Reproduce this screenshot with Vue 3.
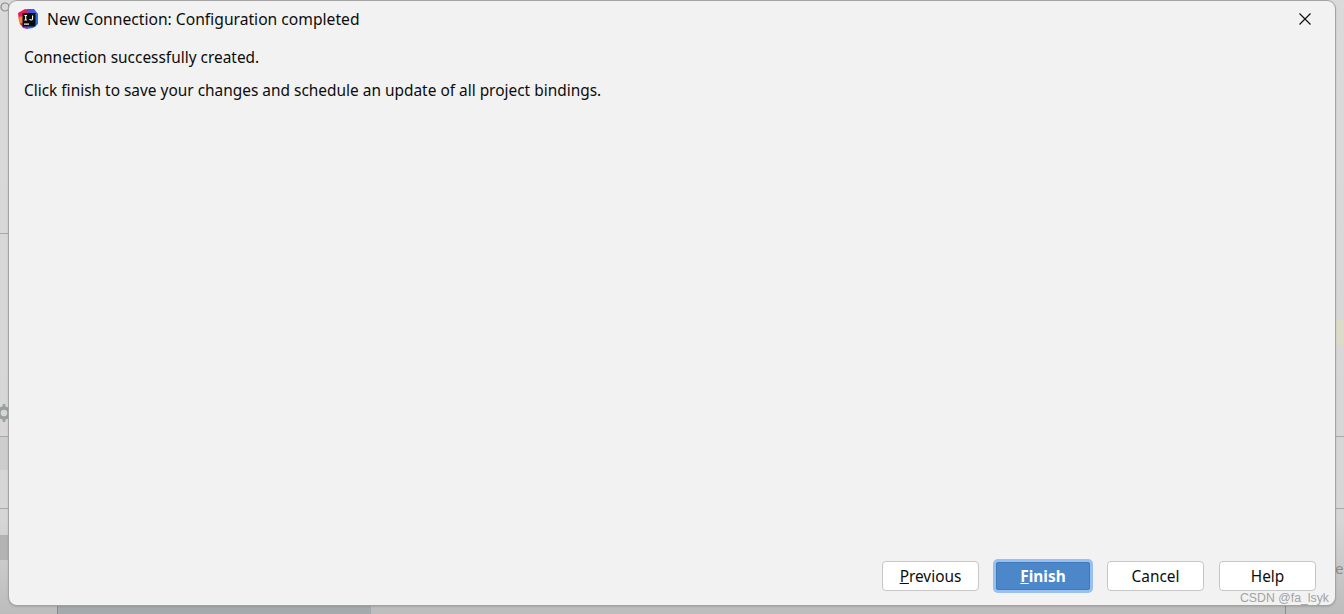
<template>
  <div class="screen">
    <!-- window behind the dialog, dimmed -->
    <div class="backdrop">
      <span class="bg-tab"></span>
      <span class="bg-tab-blue"></span>
      <span class="bg-line left-top"></span>
      <span class="bg-line left-a"></span>
      <span class="bg-band left-d"></span>
      <span class="bg-line left-b"></span>
      <span class="bg-band left-c"></span>
      <svg class="bg-ring" width="16" height="16" viewBox="0 0 16 16">
        <circle cx="5" cy="7" r="4" fill="none" stroke="#8d8d8d" stroke-width="1.2" />
      </svg>
      <svg class="bg-gear" width="18" height="18" viewBox="0 0 18 18">
        <circle cx="9" cy="9" r="5" fill="none" stroke="#9a9fa2" stroke-width="3.4" />
        <path d="M9 0V18M0 9H18M2.6 2.6 15.4 15.4M15.4 2.6 2.6 15.4" stroke="#9a9fa2" stroke-width="2.6" stroke-dasharray="3 12" />
      </svg>
      <span class="bg-panel"></span>
      <span class="bg-divider"></span>
      <span class="bg-band right-a"></span>
      <span class="bg-line right-b"></span>
      <span class="bg-line right-c"></span>
      <span class="bg-text">e</span>
    </div>

    <div class="dialog">
      <div class="titlebar">
        <svg class="logo" width="20" height="20" viewBox="0 0 20 20">
          <path d="M0 4 7 0 12 2 9 10 3 11 .5 8Z" fill="#e5195f" />
          <path d="M8 0 16 0 20 5 13 8Z" fill="#4a55d8" />
          <path d="M14 2 20 5 20 15 15 19 8 20 12 10Z" fill="#2a6fe0" />
          <path d="M0 8 6 7 7 17 2 16Z" fill="#f0833a" />
          <path d="M2 14 9 15 10 20 5 19Z" fill="#a02bb0" />
          <rect x="4.5" y="4" width="13" height="13.5" fill="#0a0a0a" />
          <rect x="6" y="14.5" width="5" height="1.2" fill="#fff" />
          <path d="M6.4 6.5H9M7.7 6.5V11M6.4 11H9M14.6 6.5V9.8C14.6 11.4 12.2 11.4 11.6 10" fill="none" stroke="#fff" stroke-width="1.1" />
        </svg>
        <span class="title">New Connection: Configuration completed</span>
        <svg class="close" width="12" height="12" viewBox="0 0 12 12">
          <path d="M.5.5 11.5 11.5M11.5.5.5 11.5" stroke="#111" stroke-width="1.2" fill="none" />
        </svg>
      </div>

      <div class="body">
        <p>Connection successfully created.</p>
        <p>Click finish to save your changes and schedule an update of all project bindings.</p>
      </div>

      <div class="footer">
        <button class="btn"><u>P</u>revious</button>
        <button class="btn primary"><u>F</u>inish</button>
        <button class="btn">Cancel</button>
        <button class="btn help">Help</button>
      </div>
      <span class="watermark">CSDN @fa_lsyk</span>
    </div>
  </div>
</template>

<script setup>
</script>

<style>
html,
body {
  margin: 0;
  overflow: hidden;
}
</style>

<style scoped>
.screen {
  position: relative;
  box-sizing: border-box;
  width: 1344px;
  height: 614px;
  padding: 1px 9px 9px;
  display: flex;
  background: linear-gradient(#dadada, #d6d6d6 85%, #bcbcbc);
  font-family: "Noto Sans", "Open Sans", sans-serif;
  color: #0c0c0c;
  overflow: hidden;
}
.backdrop {
  position: absolute;
  inset: 0;
}
.backdrop > * {
  position: absolute;
}
.bg-tab {
  left: 115px;
  top: 0;
  width: 92px;
  height: 1px;
  background: #77736e;
}
.bg-tab-blue {
  left: 406px;
  top: 0;
  width: 18px;
  height: 1px;
  background: #6d93bd;
}
.bg-line {
  height: 1px;
  background: #a9a9a9;
}
.bg-band {
  background: #cdcdcd;
}
.left-top {
  left: 0;
  top: 233px;
  width: 9px;
}
.left-a {
  left: 0;
  top: 436px;
  width: 9px;
}
.left-d {
  left: 0;
  top: 437px;
  width: 9px;
  height: 33px;
}
.left-b {
  left: 0;
  top: 508px;
  width: 9px;
}
.left-c {
  left: 0;
  top: 535px;
  width: 9px;
  height: 25px;
  background: #b3b3b3;
}
.bg-ring {
  left: 0;
  top: 0;
}
.bg-gear {
  left: -5px;
  top: 404px;
}
.bg-panel {
  left: 57px;
  top: 605px;
  width: 313px;
  height: 9px;
  background: #a5aaad;
  border-left: 1px solid #8a8a8a;
}
.bg-divider {
  left: 1285px;
  top: 605px;
  width: 1px;
  height: 9px;
  background: #8f8f8f;
}
.right-a {
  left: 1335px;
  top: 319px;
  width: 9px;
  height: 26px;
  background: #dcdac9;
}
.right-b {
  left: 1335px;
  top: 436px;
  width: 9px;
}
.right-c {
  left: 1335px;
  top: 508px;
  width: 9px;
}
.bg-text {
  left: 1335px;
  top: 558px;
  font-size: 15px;
  line-height: 20px;
  color: #8b8b8b;
}
.dialog {
  position: relative;
  flex: 1;
  display: flex;
  flex-direction: column;
  background: #f2f2f2;
  border-radius: 8px;
  box-shadow: 0 0 0 1px #a3a3a3, 0 1px 3px rgba(0, 0, 0, 0.25);
}
.titlebar {
  height: 35px;
  display: flex;
  align-items: center;
  padding: 0 24px 0 9px;
  font-size: 15.65px;
}
.logo {
  margin-right: 9px;
}
.title {
  flex: 1;
}
.body {
  flex: 1;
  padding: 11px 15px 0;
  font-size: 15.43px;
  line-height: 22px;
}
.body p {
  margin: 0 0 11px;
}
.footer {
  display: flex;
  justify-content: flex-end;
  align-items: center;
  gap: 14px;
  padding: 0 19px 14px 0;
}
.btn {
  box-sizing: border-box;
  width: 97px;
  height: 30px;
  padding: 1px 0 0;
  background: #fff;
  border: 1px solid #c6c6c6;
  border-radius: 4px;
  font: 15.4px "Noto Sans", "Open Sans", sans-serif;
  color: #0c0c0c;
}
.primary {
  width: 94px;
  height: 28px;
  margin: 0 3px;
  background: #4c87c9;
  border: 1px solid #3f78bb;
  border-radius: 2px;
  box-shadow: 0 0 0 3px #97c0ef;
  color: #fff;
  font-weight: 700;
}
.help {
  margin-left: 1px;
}
.watermark {
  position: absolute;
  right: 6px;
  bottom: -1px;
  font: 12.3px/16px "Liberation Sans", sans-serif;
  color: #a2a2a2;
}
</style>
